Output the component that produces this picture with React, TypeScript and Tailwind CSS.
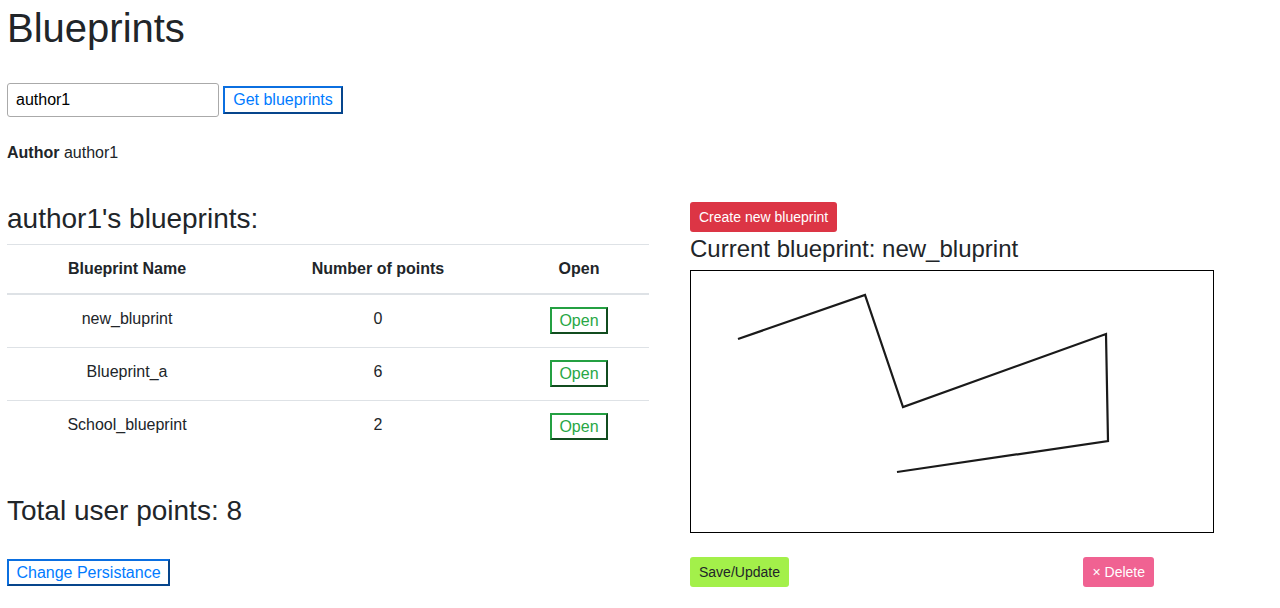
const rows = [
  { name: 'new_bluprint', points: 0 },
  { name: 'Blueprint_a', points: 6 },
  { name: 'School_blueprint', points: 2 },
];

const drawing = [
  [47, 68],
  [174, 24],
  [212, 136],
  [415, 63],
  [417, 170],
  [206, 201],
];

export default function App() {
  const total = rows.reduce((s, r) => s + r.points, 0);

  return (
    <div className="min-h-screen bg-white px-[7px] pt-[4px] font-['Liberation_Sans',Arial,sans-serif] text-[#212529]">
      <h1 className="text-[40px] leading-[48px]">Blueprints</h1>

      <div className="mt-[31px] flex items-center gap-[4px]">
        <input
          defaultValue="author1"
          className="h-[34px] w-[212px] rounded-[3px] border border-[#aaaaaa] px-[8px] text-[16px] text-black outline-none"
        />
        <button className="flex h-[28px] w-[120px] items-center justify-center border-2 border-[#0b6fe0] text-[16px] text-[#007bff] [border-style:outset]">
          Get blueprints
        </button>
      </div>

      <p className="mt-[24px] text-[16px] leading-[24px]">
        <b>Author</b> author1
      </p>

      <div className="mt-[37px] flex">
        <div className="w-[642px]">
          <h3 className="text-[28px] leading-[34px]">author1's blueprints:</h3>
          <div className="mt-[8px] border-t border-[#dee2e6] text-center text-[16px]">
            <div className="grid h-[50px] grid-cols-[240px_262px_140px] items-center border-b-2 border-[#dee2e6] font-bold">
              <div>Blueprint Name</div>
              <div>Number of points</div>
              <div>Open</div>
            </div>
            {rows.map((r, i) => (
              <div
                key={r.name}
                className={`grid h-[53px] grid-cols-[240px_262px_140px] items-start pt-[12px] ${i < rows.length - 1 ? 'border-b border-[#dee2e6]' : ''}`}
              >
                <div className="leading-[24px]">{r.name}</div>
                <div className="leading-[24px]">{r.points}</div>
                <div className="flex justify-center">
                  <button className="flex h-[27px] w-[58px] items-center justify-center border-2 border-[#24a042] text-[16px] text-[#28a745] [border-style:outset]">
                    Open
                  </button>
                </div>
              </div>
            ))}
          </div>
          <h3 className="mt-[40px] text-[28px] leading-[34px]">Total user points: {total}</h3>
          <button className="mt-[31px] flex h-[27px] w-[163px] items-center justify-center border-2 border-[#0b6fe0] text-[16px] text-[#007bff] [border-style:outset]">
            Change Persistance
          </button>
        </div>

        <div className="ml-[41px]">
          <button className="h-[30px] rounded-[3px] bg-[#dc3545] px-[9px] text-[14px] text-white">
            Create new blueprint
          </button>
          <h4 className="mt-[2px] text-[24px] leading-[29px]">Current blueprint: new_bluprint</h4>
          <div className="mt-[7px] h-[263px] w-[524px] border border-black">
            <svg width="522" height="261" viewBox="0 0 522 261">
              <polyline
                points={drawing.map((p) => p.join(',')).join(' ')}
                fill="none"
                stroke="#1a1a1a"
                strokeWidth="2.2"
                strokeLinejoin="miter"
              />
            </svg>
          </div>
          <div className="mt-[24px] flex w-[464px] items-center">
            <button className="h-[30px] rounded-[3px] bg-[#a3f04a] px-[9px] pt-[1px] text-[14px] text-[#212529]">
              Save/Update
            </button>
            <button className="ml-auto h-[30px] rounded-[3px] bg-[#f06292] px-[9px] pt-[1px] text-[14px] text-white">
              × Delete
            </button>
          </div>
        </div>
      </div>
    </div>
  );
}
